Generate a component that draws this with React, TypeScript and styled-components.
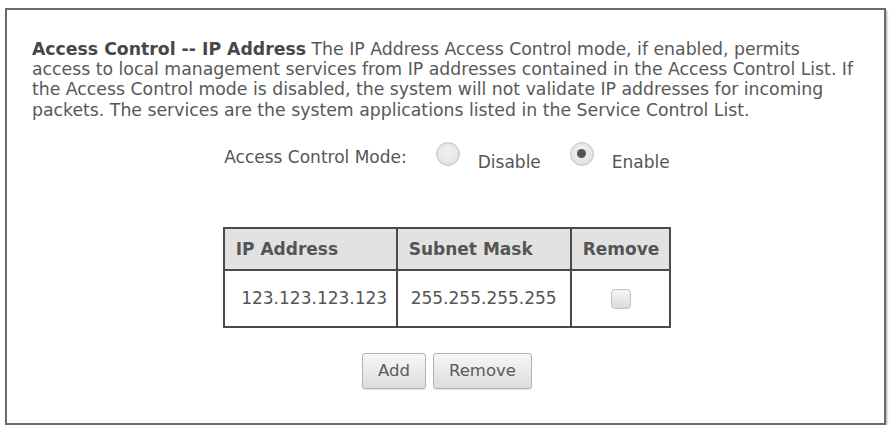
import React, { useState } from 'react';
import styled, { createGlobalStyle } from 'styled-components';

const GlobalStyle = createGlobalStyle`
  html, body {
    margin: 0;
    padding: 0;
    background: #ffffff;
  }
  body {
    font-family: 'DejaVu Sans', Verdana, sans-serif;
    color: #555555;
  }
`;

const Frame = styled.div`
  box-sizing: border-box;
  width: 881px;
  height: 417px;
  margin: 8px 0 0 5px;
  border: 2px solid #6a6a6a;
  box-shadow: 1px 2px 2px rgba(0, 0, 0, 0.35);
  padding: 29px 22px 0 25px;
  display: flex;
  flex-direction: column;
  align-items: center;
`;

const Intro = styled.p`
  align-self: stretch;
  margin: 0;
  font-size: 17.3px;
  line-height: 20.2px;
  color: #585858;
`;

const Title = styled.b`
  color: #474747;
`;

const ModeRow = styled.div`
  display: flex;
  align-items: flex-start;
  margin-top: 26px;
  font-size: 17px;
  line-height: 20px;
`;

const ModeLabel = styled.span`
  margin-right: 29px;
  padding-top: 1px;
`;

const Radio = styled.input.attrs({ type: 'radio' })`
  appearance: none;
  box-sizing: border-box;
  width: 24px;
  height: 24px;
  margin: -4px 0 0 0;
  border-radius: 50%;
  border: 1px solid #c9c9c9;
  background: radial-gradient(circle at 50% 40%, #f2f2f2 0%, #dedede 100%);
  box-shadow: inset 0 0 2px rgba(0, 0, 0, 0.12);
  display: grid;
  place-items: center;
  cursor: pointer;

  &:checked::after {
    content: '';
    width: 9px;
    height: 9px;
    border-radius: 50%;
    background: #555555;
  }
`;

const RadioText = styled.label`
  margin: 6px 29px 0 18px;
  cursor: pointer;

  &:last-child {
    margin-right: 0;
  }
`;

const Table = styled.table`
  margin-top: 55px;
  border-collapse: collapse;
  border: 2px solid #4a4a4a;
  font-size: 17px;
`;

const Head = styled.th<{ $w: number }>`
  box-sizing: border-box;
  width: ${(p) => p.$w}px;
  height: 42px;
  padding: 0 10px 0 11px;
  text-align: left;
  background: #e2e2e2;
  border: 2px solid #4a4a4a;
  color: #555555;
  font-weight: bold;
`;

const Cell = styled.td`
  height: 55px;
  padding: 0 6px;
  text-align: center;
  border: 2px solid #4a4a4a;

  &:first-child {
    padding-left: 12px;
    padding-right: 4px;
  }
`;

const Check = styled.input.attrs({ type: 'checkbox' })`
  appearance: none;
  width: 20px;
  height: 20px;
  margin: 0;
  vertical-align: middle;
  border: 1px solid #c2c2c2;
  border-radius: 4px;
  background: linear-gradient(#f5f5f5, #dadada);
  cursor: pointer;

  &:checked {
    background: #9a9a9a;
  }
`;

const Actions = styled.div`
  display: flex;
  gap: 7px;
  margin-top: 25px;
`;

const Button = styled.button`
  height: 36px;
  padding: 0 15px;
  font-family: 'DejaVu Sans', Verdana, sans-serif;
  font-size: 16.5px;
  color: #5a5a5a;
  background: linear-gradient(#f7f7f7, #dcdcdc);
  border: 1px solid #b3b3b3;
  border-radius: 3px;
  box-shadow: 0 1px 1px rgba(0, 0, 0, 0.1);
  cursor: pointer;
`;

type Rule = { ip: string; mask: string };

const App: React.FC = () => {
  const [mode, setMode] = useState<'disable' | 'enable'>('enable');
  const [rules] = useState<Rule[]>([{ ip: '123.123.123.123', mask: '255.255.255.255' }]);
  const [marked, setMarked] = useState<boolean[]>([false]);

  return (
    <>
      <GlobalStyle />
      <Frame>
        <Intro>
          <Title>Access Control -- IP Address</Title> The IP Address Access Control mode, if
          enabled, permits access to local management services from IP addresses contained in the
          Access Control List. If the Access Control mode is disabled, the system will not validate
          IP addresses for incoming packets. The services are the system applications listed in the
          Service Control List.
        </Intro>

        <ModeRow>
          <ModeLabel>Access Control Mode:</ModeLabel>
          <Radio
            id="acl-off"
            name="aclMode"
            checked={mode === 'disable'}
            onChange={() => setMode('disable')}
          />
          <RadioText htmlFor="acl-off">Disable</RadioText>
          <Radio
            id="acl-on"
            name="aclMode"
            checked={mode === 'enable'}
            onChange={() => setMode('enable')}
          />
          <RadioText htmlFor="acl-on">Enable</RadioText>
        </ModeRow>

        <Table>
          <thead>
            <tr>
              <Head $w={173}>IP Address</Head>
              <Head $w={174}>Subnet Mask</Head>
              <Head $w={98}>Remove</Head>
            </tr>
          </thead>
          <tbody>
            {rules.map((r, i) => (
              <tr key={r.ip}>
                <Cell>{r.ip}</Cell>
                <Cell>{r.mask}</Cell>
                <Cell>
                  <Check
                    checked={marked[i]}
                    onChange={(e) =>
                      setMarked((m) => m.map((v, j) => (j === i ? e.target.checked : v)))
                    }
                  />
                </Cell>
              </tr>
            ))}
          </tbody>
        </Table>

        <Actions>
          <Button type="button">Add</Button>
          <Button type="button">Remove</Button>
        </Actions>
      </Frame>
    </>
  );
};

export default App;
